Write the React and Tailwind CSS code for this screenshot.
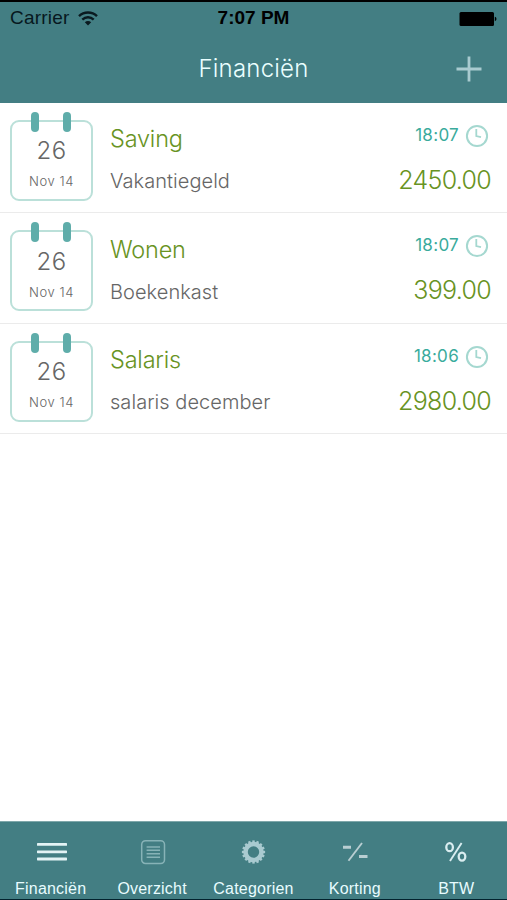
import React from "react";

const ENTRIES = [
  { id: 1, day: "26", month: "Nov 14", category: "Saving", note: "Vakantiegeld", time: "18:07", amount: "2450.00" },
  { id: 2, day: "26", month: "Nov 14", category: "Wonen", note: "Boekenkast", time: "18:07", amount: "399.00" },
  { id: 3, day: "26", month: "Nov 14", category: "Salaris", note: "salaris december", time: "18:06", amount: "2980.00" },
];

const GEAR_TEETH = Array.from({ length: 16 }, (_, i) => i * 22.5);

function WifiIcon() {
  return (
    <svg width="20" height="15" viewBox="0 0 20 15" fill="none" stroke="#0a1a20" strokeWidth="2.4">
      <path d="M1 5.2C6 0.3 14 0.3 19 5.2" />
      <path d="M4.3 8.6C7.6 5.5 12.4 5.5 15.7 8.6" />
      <path d="M10 14.5L6.8 11.2C8.6 9.6 11.4 9.6 13.2 11.2Z" fill="#0a1a20" stroke="none" />
    </svg>
  );
}

function BatteryIcon() {
  return (
    <svg width="39" height="16" viewBox="0 0 39 16" fill="#000">
      <rect x="1.5" y="1" width="34.5" height="14" rx="1.5" />
      <path d="M36.8 5.8C39 6.2 39 9.8 36.8 10.2Z" />
    </svg>
  );
}

function ClockIcon() {
  return (
    <svg width="24" height="24" viewBox="0 0 24 24" fill="none" stroke="#a5d8d0">
      <circle cx="12" cy="12" r="10.1" strokeWidth="2" />
      <path d="M11.3 5V12L16 13.2" strokeWidth="1.8" />
    </svg>
  );
}

function GearIcon() {
  return (
    <svg width="26" height="26" viewBox="0 0 26 26" fill="none" stroke="#a9cad0">
      <circle cx="13.5" cy="13" r="8" strokeWidth="4.6" />
      {GEAR_TEETH.map(a => (
        <path key={a} d="M13.5 1.4V4" strokeWidth="2.4" transform={`rotate(${a} 13.5 13)`} />
      ))}
    </svg>
  );
}

const TABS = [
  {
    label: "Financiën",
    icon: (
      <svg className="ml-[2px]" width="30" height="18" viewBox="0 0 30 18" fill="#e3f3f5">
        <rect y="0" width="30" height="2.8" rx="0.6" />
        <rect y="7.4" width="30" height="2.8" rx="0.6" />
        <rect y="14.6" width="30" height="2.8" rx="0.6" />
      </svg>
    ),
  },
  {
    label: "Overzicht",
    icon: (
      <svg className="ml-[2px]" width="26" height="26" viewBox="0 0 26 26" fill="none" stroke="#87b3b7" strokeWidth="1.5">
        <rect x="1.7" y="1.7" width="22.8" height="22.8" rx="3.8" />
        <path d="M6.6 7.9H20M6.6 11.2H20M6.6 14.7H20M6.6 18.2H20" />
      </svg>
    ),
  },
  { label: "Categorien", icon: <GearIcon /> },
  {
    label: "Korting",
    icon: (
      <svg width="26" height="20" viewBox="0 0 26 20" fill="none" stroke="#b9ced2">
        <path d="M1 5.2H9M17 14.4H25.5" strokeWidth="3" />
        <path d="M6.5 18.8L20 1" strokeWidth="1.9" />
      </svg>
    ),
  },
  {
    label: "BTW",
    icon: (
      <svg width="22" height="20" viewBox="0 0 22 20" fill="none" stroke="#d9edf0" strokeWidth="2.3">
        <ellipse cx="4.6" cy="5.2" rx="3.3" ry="4" />
        <ellipse cx="17" cy="14.6" rx="3.3" ry="4" />
        <path d="M5 19L16.6 1" strokeWidth="1.9" />
      </svg>
    ),
  },
];

function CalendarBadge({ day, month }) {
  return (
    <div className="relative mt-[17px] flex h-[81px] w-[83px] flex-col items-center rounded-[9px] border-2 border-[#bbe0d9] bg-white text-[#666]">
      <span className="absolute -top-[10px] left-[19px] h-[20px] w-[8px] rounded-[4px] bg-[#5fadaa]" />
      <span className="absolute -top-[10px] right-[20px] h-[20px] w-[8px] rounded-[4px] bg-[#5fadaa]" />
      <p className="mt-[15.5px] text-[24px] leading-[28px] font-[350] tracking-[0.4px]">{day}</p>
      <p className="mt-[8px] text-[13px] leading-[16px] font-[350] tracking-[0.6px]">{month}</p>
    </div>
  );
}

function EntryRow({ entry }) {
  return (
    <div className="flex h-[110.5px] border-b border-[#ebebeb] pr-4 pl-[10px]">
      <CalendarBadge day={entry.day} month={entry.month} />
      <div className="ml-[17px] flex-1 pt-[21.5px] whitespace-nowrap">
        <p className="text-[23.5px] leading-[30px] font-[350] tracking-[-0.2px] text-[#689323]">{entry.category}</p>
        <p className="mt-[13px] text-[20px] leading-[28px] font-[350] tracking-[0.05px] text-[#666]">{entry.note}</p>
      </div>
      <div className="flex flex-col items-end pt-[21px]">
        <div className="mr-[2px] flex h-6 items-center gap-[6px] text-[17px] font-[400] tracking-[0.3px] text-[#3aab9c]">
          <span>{entry.time}</span>
          <ClockIcon />
        </div>
        <p className="mt-[17px] text-[25px] leading-[30px] font-[350] tracking-[-0.7px] text-[#689323]">{entry.amount}</p>
      </div>
    </div>
  );
}

export default function App() {
  return (
    <div className="flex h-[900px] w-[507px] flex-col overflow-hidden bg-white font-['Inter',sans-serif]">
      <header className="h-[102.5px] border-t-2 border-black bg-[#437e83]">
        {/* Status bar */}
        <div className="grid h-[33px] grid-cols-3 items-center px-[10px] font-['Liberation_Sans',sans-serif] text-[19px] text-[#071820]">
          <div className="flex items-center gap-[9px]">
            <span className="tracking-[0.2px]">Carrier</span>
            <WifiIcon />
          </div>
          <span className="text-center font-bold text-black">7:07 PM</span>
          <div className="flex justify-end">
            <BatteryIcon />
          </div>
        </div>
        {/* Title bar */}
        <div className="grid h-[67px] grid-cols-[1fr_auto_1fr] items-center px-[25px]">
          <span />
          <h1 className="text-[24px] font-light tracking-[0.2px] text-[#eaffff]">Financiën</h1>
          <svg className="justify-self-end" width="26" height="26" viewBox="0 0 26 26" stroke="#a9cbd0" strokeWidth="2.8">
            <path d="M0.5 13H25.5M13 0.5V25.5" />
          </svg>
        </div>
      </header>

      <main className="flex-1">
        {ENTRIES.map(e => (
          <EntryRow key={e.id} entry={e} />
        ))}
      </main>

      <nav className="grid h-[79px] grid-cols-5 border-t border-b border-t-[#7fa7aa] border-b-[#03232e] bg-[#437e83]">
        {TABS.map(t => (
          <div key={t.label} className="flex flex-col items-center">
            <div className="mt-[16px] flex h-[28px] items-center">{t.icon}</div>
            <p className="mt-[13px] font-['Liberation_Sans',sans-serif] text-[16px] leading-[20px] tracking-[0.2px] text-[#e8fcff]">{t.label}</p>
          </div>
        ))}
      </nav>
    </div>
  );
}
